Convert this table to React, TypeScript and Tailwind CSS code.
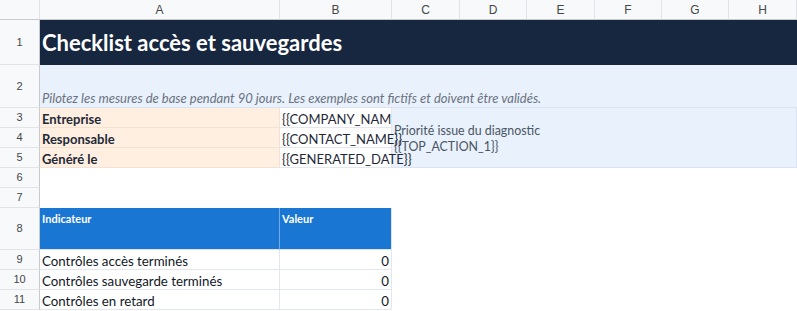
import React from 'react';

const colHeaders = [
  { label: '', cls: 'col-start-1' },
  { label: 'A', cls: 'col-start-2' },
  { label: 'B', cls: 'col-start-3' },
  { label: 'C', cls: 'col-start-4' },
  { label: 'D', cls: 'col-start-5' },
  { label: 'E', cls: 'col-start-6' },
  { label: 'F', cls: 'col-start-7' },
  { label: 'G', cls: 'col-start-8' },
  { label: 'H', cls: 'col-start-9' },
];

const rowHeaders = [
  { n: 1, cls: 'row-start-2' },
  { n: 2, cls: 'row-start-3' },
  { n: 3, cls: 'row-start-4' },
  { n: 4, cls: 'row-start-5' },
  { n: 5, cls: 'row-start-6' },
  { n: 6, cls: 'row-start-7' },
  { n: 7, cls: 'row-start-8' },
  { n: 8, cls: 'row-start-9' },
  { n: 9, cls: 'row-start-10' },
  { n: 10, cls: 'row-start-11' },
  { n: 11, cls: 'row-start-12' },
];

const infoRows = [
  { label: 'Entreprise', value: '{{COMPANY_NAME}}', row: 'row-start-4', clip: true },
  { label: 'Responsable', value: '{{CONTACT_NAME}}', row: 'row-start-5', clip: false },
  { label: 'Généré le', value: '{{GENERATED_DATE}}', row: 'row-start-6', clip: false },
];

const stats = [
  { label: 'Contrôles accès terminés', value: 0, row: 'row-start-10' },
  { label: 'Contrôles sauvegarde terminés', value: 0, row: 'row-start-11' },
  { label: 'Contrôles en retard', value: 0, row: 'row-start-12' },
];

export default function App() {
  return (
    <div className="w-[797px] h-[311px] bg-white overflow-hidden font-['Lato','Liberation_Sans',sans-serif]">
      <div className="grid grid-cols-[40px_240px_112px_68px_67px_68px_67px_67px_68px] grid-rows-[20px_45px_43px_20px_20px_20px_20px_20px_42px_20px_20px_20px]">
        {colHeaders.map((c) => (
          <div
            key={c.label || 'corner'}
            className={`${c.cls} row-start-1 bg-[#f8f9fa] border-r border-b border-r-[#e1e3e6] border-b-[#c7c9cc] flex items-center justify-center text-[12px] text-[#444746] font-['Liberation_Sans',Arial,sans-serif]`}
          >
            {c.label}
          </div>
        ))}
        {rowHeaders.map((r) => (
          <div
            key={r.n}
            className={`${r.cls} col-start-1 bg-[#f8f9fa] border-r border-b border-r-[#c7c9cc] border-b-[#e1e3e6] flex items-center justify-center text-[11px] text-[#444746] font-['Liberation_Sans',Arial,sans-serif]`}
          >
            {r.n}
          </div>
        ))}

        <div className="col-start-2 col-span-8 row-start-2 bg-[#182740] flex items-center pl-[2px] text-white font-bold text-[22px] whitespace-nowrap">
          Checklist accès et sauvegardes
        </div>

        <div className="col-start-2 col-span-8 row-start-3 bg-[#e8f1fc] border-b border-[#dbe4f0] flex items-end pl-[2px] italic text-[13px] leading-[18px] text-[#6b7280] whitespace-nowrap">
          Pilotez les mesures de base pendant 90 jours. Les exemples sont fictifs et doivent être validés.
        </div>

        {infoRows.map((r) => (
          <React.Fragment key={r.label}>
            <div
              className={`${r.row} col-start-2 bg-[#feefe1] border-r border-b border-[#f1e2d5] flex items-end pl-[2px] font-bold text-[13px] leading-[16px] text-[#1f2937] whitespace-nowrap overflow-hidden`}
            >
              {r.label}
            </div>
            <div
              className={`${r.row} col-start-3 relative z-10 bg-white border-r border-b border-[#e3e8ef] flex items-end pl-[2px] text-[13px] leading-[16px] text-[#1f2937] whitespace-nowrap ${
                r.clip ? 'overflow-hidden' : 'overflow-visible'
              }`}
            >
              {r.value}
            </div>
          </React.Fragment>
        ))}

        <div className="col-start-4 col-span-6 row-start-4 row-span-3 bg-[#e8f1fc] border-r border-b border-[#dbe4f0] flex flex-col justify-center pl-[2px] pt-[2px] text-[12.4px] leading-[16px] text-[#4b5563] whitespace-nowrap">
          <span>Priorité issue du diagnostic</span>
          <span>{'{{TOP_ACTION_1}}'}</span>
        </div>

        <div className="col-start-2 row-start-9 bg-[#1976d2] border-r border-b border-r-[#72a9e6] border-b-[#dbe4f0] pl-[2px] pt-[3px] text-white font-bold text-[11px]">
          Indicateur
        </div>
        <div className="col-start-3 row-start-9 bg-[#1976d2] border-r border-b border-r-[#dbe4f0] border-b-[#dbe4f0] pl-[2px] pt-[3px] text-white font-bold text-[11px]">
          Valeur
        </div>

        {stats.map((s) => (
          <React.Fragment key={s.label}>
            <div
              className={`${s.row} col-start-2 bg-white border-r border-b border-[#e1e6ef] flex items-end pl-[2px] text-[13.3px] leading-[16px] text-[#111827] whitespace-nowrap overflow-hidden`}
            >
              {s.label}
            </div>
            <div
              className={`${s.row} col-start-3 bg-white border-r border-b border-[#e1e6ef] flex items-end justify-end pr-[2px] text-[13.3px] leading-[16px] text-[#111827]`}
            >
              {s.value}
            </div>
          </React.Fragment>
        ))}
      </div>
    </div>
  );
}
